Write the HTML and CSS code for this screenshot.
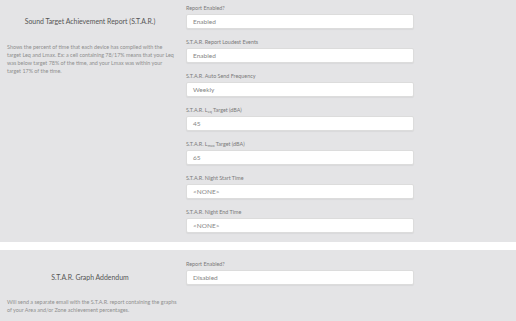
FILE: index.html
```html
<!DOCTYPE html>
<html lang="en">
<head>
  <meta charset="UTF-8" />
  <title>S.T.A.R. Settings</title>
  <link rel="stylesheet" href="styles.css">
</head>
<body>
  <section class="setting first">
    <div class="info">
      <h2>Sound Target Achievement Report (S.T.A.R.)</h2>
      <p>Shows the percent of time that each device has complied with the target Leq and Lmax. Ex: a cell containing 78/17% means that your Leq was below target 78% of the time, and your Lmax was within your target 17% of the time.</p>
    </div>
    <div class="fields">
      <div class="field">
        <label>Report Enabled?</label>
        <div class="input">Enabled</div>
      </div>
      <div class="field">
        <label>S.T.A.R. Report Loudest Events</label>
        <div class="input">Enabled</div>
      </div>
      <div class="field">
        <label>S.T.A.R. Auto Send Frequency</label>
        <div class="input">Weekly</div>
      </div>
      <div class="field">
        <label>S.T.A.R. L<sub>eq</sub> Target (dBA)</label>
        <div class="input">45</div>
      </div>
      <div class="field">
        <label>S.T.A.R. L<sub>max</sub> Target (dBA)</label>
        <div class="input">65</div>
      </div>
      <div class="field">
        <label>S.T.A.R. Night Start Time</label>
        <div class="input">&lt;NONE&gt;</div>
      </div>
      <div class="field">
        <label>S.T.A.R. Night End Time</label>
        <div class="input">&lt;NONE&gt;</div>
      </div>
    </div>
  </section>

  <div class="divider"></div>

  <section class="setting second">
    <div class="info">
      <h2>S.T.A.R. Graph Addendum</h2>
      <p>Will send a separate email with the S.T.A.R. report containing the graphs of your Area and/or Zone achievement percentages.</p>
    </div>
    <div class="fields">
      <div class="field">
        <label>Report Enabled?</label>
        <div class="input">Disabled</div>
      </div>
    </div>
  </section>
</body>
</html>
```

FILE: styles.css
```css
:root {
  --bg: #e4e4e6;
  --title: #555;
  --muted: #8f8f8f;
  --label: #7a7a7a;
  --field-text: #858585;
}

* {
  box-sizing: border-box;
  margin: 0;
  padding: 0;
}

html, body {
  background: var(--bg);
  font-family: Lato, 'Open Sans', sans-serif;
  overflow: hidden;
}

.setting {
  display: flex;
  gap: 6px;
}

.setting.first {
  padding: 4px 0 9px;
}

.setting.second {
  padding: 10px 0 0;
}

.info {
  width: 180px;
  padding: 10px 0 0 7px;
}

.info h2 {
  font-size: 6.9px;
  font-weight: 400;
  line-height: 15px;
  color: var(--title);
  text-align: center;
  padding-right: 7px;
}

.setting.first .info h2 {
  margin-bottom: 14px;
}

.setting.second .info h2 {
  margin-bottom: 13px;
}

.info p {
  font-size: 5.4px;
  line-height: 8px;
  color: var(--muted);
  max-width: 170px;
}

.setting.second .info p {
  max-width: 172px;
}

.fields {
  width: 228px;
}

.field {
  margin-bottom: 9px;
}

.field:last-child {
  margin-bottom: 0;
}

.field label {
  display: block;
  font-size: 5.4px;
  line-height: 8px;
  margin-bottom: 2px;
  color: var(--label);
}

.field label sub {
  font-size: 3.8px;
  vertical-align: -1px;
  line-height: 0;
}

.input {
  height: 15px;
  background: #fff;
  border: 1px solid #dcdcdc;
  border-radius: 2px;
  box-shadow: 0 1px 1px rgba(0, 0, 0, 0.05);
  padding: 0 6px;
  font-size: 6.5px;
  line-height: 13px;
  color: var(--field-text);
}

.divider {
  height: 8px;
  background: #fff;
}
```
